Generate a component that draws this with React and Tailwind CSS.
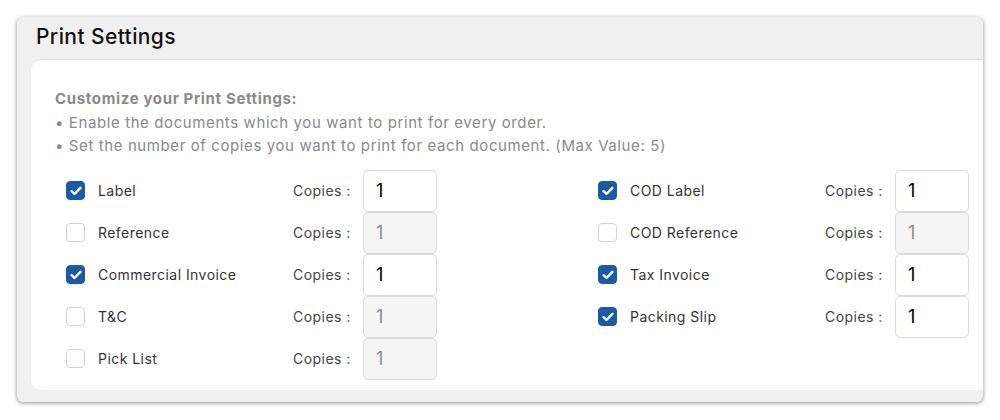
import React, { useState } from "react";

const LEFT_DOCS = [
  { name: "Label", checked: true },
  { name: "Reference", checked: false },
  { name: "Commercial Invoice", checked: true },
  { name: "T&C", checked: false },
  { name: "Pick List", checked: false },
];

const RIGHT_DOCS = [
  { name: "COD Label", checked: true },
  { name: "COD Reference", checked: false },
  { name: "Tax Invoice", checked: true },
  { name: "Packing Slip", checked: true },
];

const Checkbox = ({ checked, onToggle }) => (
  <button
    type="button"
    onClick={onToggle}
    className={`w-[19px] h-[19px] rounded-[4px] flex items-center justify-center shrink-0 ${
      checked ? "bg-[#1c5aa5] border border-[#1c5aa5]" : "bg-white border border-[#d3d3d3]"
    }`}
  >
    {checked && (
      <svg width="12" height="10" viewBox="0 0 12 10" fill="none">
        <path
          d="M1.6 5.2 L4.5 8 L10.4 1.8"
          stroke="white"
          strokeWidth="2.4"
          strokeLinecap="round"
          strokeLinejoin="round"
        />
      </svg>
    )}
  </button>
);

const DocRow = ({ doc, onToggle }) => (
  <div className="flex items-center h-[42px]">
    <Checkbox checked={doc.checked} onToggle={onToggle} />
    <span className="ml-[13px] w-[195px] text-[14px] text-[#333] tracking-[0.45px]">
      {doc.name}
    </span>
    <span className="w-[70px] text-[14px] text-[#444] tracking-[0.45px]">Copies :</span>
    <input
      type="text"
      defaultValue="1"
      disabled={!doc.checked}
      className={`w-[74px] h-[42px] rounded-[5px] border border-[#dadada] pl-[12px] text-[18px] outline-none ${
        doc.checked ? "bg-white text-black" : "bg-[#f5f5f5] text-[#8d8d8d]"
      }`}
    />
  </div>
);

const Column = ({ initial }) => {
  const [docs, setDocs] = useState(initial);
  const toggle = (i) =>
    setDocs((prev) => prev.map((d, j) => (j === i ? { ...d, checked: !d.checked } : d)));
  return (
    <div className="flex flex-col">
      {docs.map((doc, i) => (
        <DocRow key={doc.name} doc={doc} onToggle={() => toggle(i)} />
      ))}
    </div>
  );
};

export default function App() {
  return (
    <div
      className="w-[1000px] h-[420px] bg-white pt-[17px] pl-[17px]"
      style={{ fontFamily: "Inter, 'Noto Sans', sans-serif" }}
    >
      <div className="w-[966px] h-[385px] bg-[#f0f0f0] rounded-[6px] shadow-[0_1px_4px_rgba(0,0,0,0.45)] overflow-hidden flex flex-col">
        <div className="h-[42px] flex items-center pl-[19px] shrink-0">
          <h1 className="text-[21px] font-medium text-[#111] tracking-[0.4px] -mt-[2px]">Print Settings</h1>
        </div>
        <div className="ml-[14px] -mr-[20px] h-[331px] bg-white rounded-l-[10px] border-t border-[#dedede] pl-[24px] pt-[27px]">
          <div className="text-[15px] leading-[23.5px] text-[#8a8a8a] tracking-[0.6px]">
            <p className="font-bold tracking-[0.65px]">Customize your Print Settings:</p>
            <p>• Enable the documents which you want to print for every order.</p>
            <p>• Set the number of copies you want to print for each document. (Max Value: 5)</p>
          </div>
          <div className="mt-[12px] ml-[11px] grid grid-cols-[532px_1fr]">
            <Column initial={LEFT_DOCS} />
            <Column initial={RIGHT_DOCS} />
          </div>
        </div>
      </div>
    </div>
  );
}
